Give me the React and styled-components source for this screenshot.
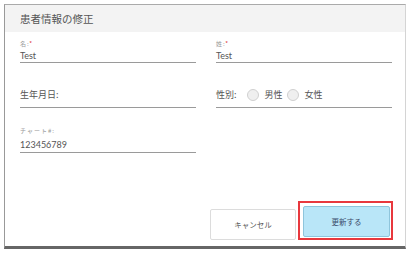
import React from "react";
import styled, { createGlobalStyle } from "styled-components";

const GlobalStyle = createGlobalStyle`
  html, body {
    margin: 0;
    padding: 0;
    background: #fff;
  }
  body {
    font-family: "Lato", "Noto Sans CJK JP", sans-serif;
  }
`;

const Page = styled.div`
  width: 413px;
  height: 253px;
  padding: 4px 0 0 4px;
  box-sizing: border-box;
`;

const Dialog = styled.div`
  width: 402px;
  height: 245px;
  box-sizing: border-box;
  border-top: 1px solid #aaa;
  border-left: 1px solid #999;
  border-right: 1px solid #d4d4d4;
  border-bottom: 3px solid #666;
  display: flex;
  flex-direction: column;
  background: #fff;
`;

const Header = styled.div`
  height: 27px;
  background: #f3f3f3;
  display: flex;
  align-items: center;
  padding-left: 15px;
  font-family: "Noto Sans CJK JP", sans-serif;
  font-size: 10.5px;
  color: #555;
`;

const Body = styled.div`
  flex: 1;
  display: grid;
  grid-template-columns: 176px 176px;
  column-gap: 20px;
  row-gap: 18px;
  align-content: start;
  padding: 4px 0 0 15px;
`;

const Field = styled.div`
  height: 27px;
  box-sizing: border-box;
  border-bottom: 1px solid #9a9a9a;
  display: flex;
  flex-direction: column;
  justify-content: flex-end;
  padding-bottom: ${(p) => p.$pad || 0}px;
`;

const Empty = styled.div``;

const Label = styled.div`
  font-family: "Noto Sans CJK JP", sans-serif;
  font-size: 6px;
  line-height: 9px;
  letter-spacing: 1px;
  color: #999;
  margin-bottom: ${(p) => p.$gap || 2}px;

  span {
    color: #e03a3a;
  }
`;

const Value = styled.div`
  font-size: 9px;
  line-height: 12px;
  color: #555;
`;

const Plain = styled.div`
  font-family: "Noto Sans CJK JP", sans-serif;
  font-size: 9px;
  line-height: 12px;
  color: #555;
  display: flex;
  align-items: center;
`;

const GenderLabel = styled.span`
  margin-right: 10px;
`;

const Radio = styled.span`
  width: 12px;
  height: 12px;
  box-sizing: border-box;
  border-radius: 50%;
  border: 1px solid #d0d0d0;
  background: #efefef;
  margin-right: 6px;
`;

const Option = styled.span`
  margin-right: 4px;
`;

const Footer = styled.div`
  display: flex;
  justify-content: flex-end;
  align-items: flex-end;
  gap: 2px;
  padding: 0 12px 6px 0;
`;

const Button = styled.button`
  height: 31px;
  width: ${(p) => p.$w}px;
  box-sizing: border-box;
  border-radius: 2px;
  font-family: "Noto Sans CJK JP", sans-serif;
  font-size: 7.5px;
  cursor: pointer;
  padding: 0;
  background: ${(p) => (p.$primary ? "#b9e6f8" : "#fff")};
  border: 1px solid ${(p) => (p.$primary ? "#8ec5dc" : "#dcdcdc")};
  color: ${(p) => (p.$primary ? "#3a4a6a" : "#555")};
`;

const Highlight = styled.div`
  border: 2px solid #e8383d;
  padding: 3px 1px 1px 3px;
  display: flex;
`;

export default function App() {
  return (
    <>
      <GlobalStyle />
      <Page>
        <Dialog>
          <Header>患者情報の修正</Header>
          <Body>
            <Field>
              <Label>
                名:<span>*</span>
              </Label>
              <Value>Test</Value>
            </Field>
            <Field>
              <Label>
                姓:<span>*</span>
              </Label>
              <Value>Test</Value>
            </Field>
            <Field $pad={6}>
              <Plain>生年月日:</Plain>
            </Field>
            <Field $pad={6}>
              <Plain>
                <GenderLabel>性別:</GenderLabel>
                <Radio />
                <Option>男性</Option>
                <Radio />
                <Option>女性</Option>
              </Plain>
            </Field>
            <Field $pad={1}>
              <Label $gap={4}>チャート#:</Label>
              <Value>123456789</Value>
            </Field>
            <Empty />
          </Body>
          <Footer>
            <Button $w={86}>キャンセル</Button>
            <Highlight>
              <Button $w={87} $primary>
                更新する
              </Button>
            </Highlight>
          </Footer>
        </Dialog>
      </Page>
    </>
  );
}
